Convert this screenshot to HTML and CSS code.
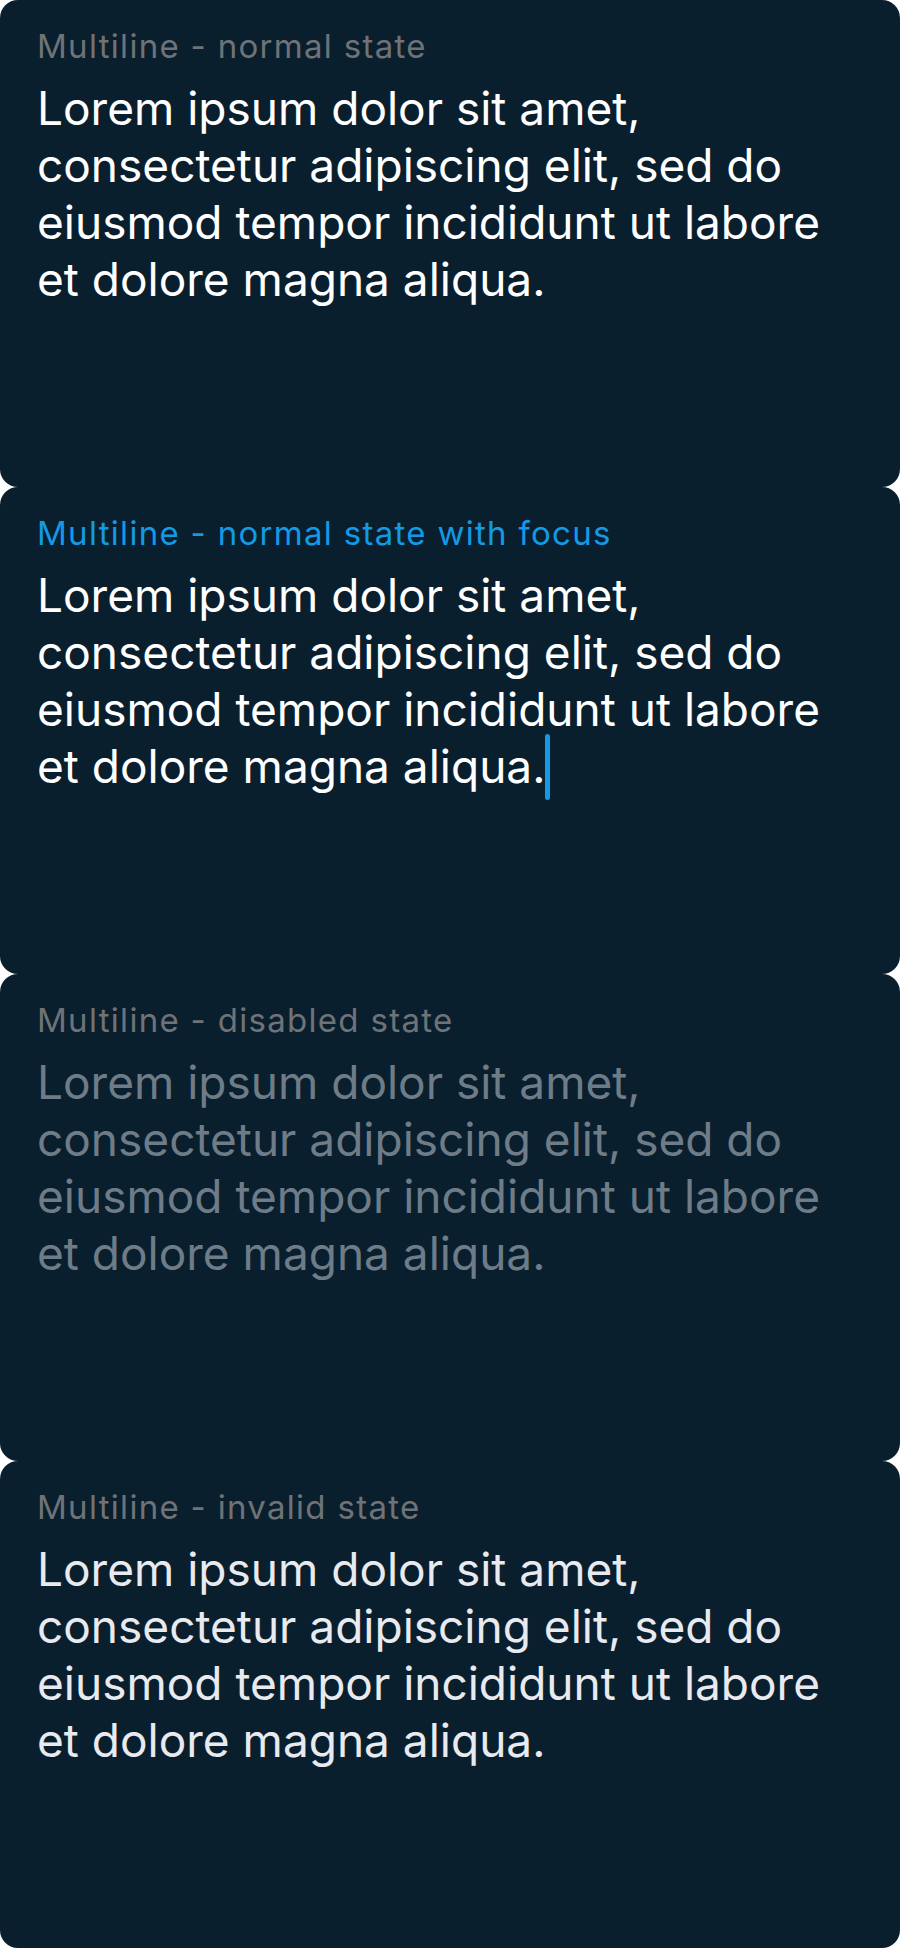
FILE: index.html
```html
<!DOCTYPE html>
<html lang="en">
<head>
<meta charset="utf-8">
<title>Multiline states</title>
<link rel="stylesheet" href="styles.css">
</head>
<body>
<main class="stack">
  <section class="field">
    <div class="field-label">Multiline - normal state</div>
    <div class="field-text">Lorem ipsum dolor sit amet,<br>consectetur adipiscing elit, sed do<br>eiusmod tempor incididunt ut labore<br>et dolore magna aliqua.</div>
  </section>
  <section class="field field--focus">
    <div class="field-label">Multiline - normal state with focus</div>
    <div class="field-text">Lorem ipsum dolor sit amet,<br>consectetur adipiscing elit, sed do<br>eiusmod tempor incididunt ut labore<br>et dolore magna aliqua.<span class="caret"></span></div>
  </section>
  <section class="field field--disabled">
    <div class="field-label">Multiline - disabled state</div>
    <div class="field-text">Lorem ipsum dolor sit amet,<br>consectetur adipiscing elit, sed do<br>eiusmod tempor incididunt ut labore<br>et dolore magna aliqua.</div>
  </section>
  <section class="field field--invalid">
    <div class="field-label">Multiline - invalid state</div>
    <div class="field-text">Lorem ipsum dolor sit amet,<br>consectetur adipiscing elit, sed do<br>eiusmod tempor incididunt ut labore<br>et dolore magna aliqua.</div>
  </section>
</main>
</body>
</html>
```
FILE: styles.css
```css
html, body {
  margin: 0;
  padding: 0;
  background: #ffffff;
}
body {
  font-family: Inter, "Noto Sans", "Liberation Sans", sans-serif;
}
.stack {
  display: flex;
  flex-direction: column;
}
.field {
  box-sizing: border-box;
  height: 487px;
  background: #0a1f2e;
  border-radius: 18px;
  padding: 28px 37px 0;
  display: flex;
  flex-direction: column;
}
.field-label {
  font-size: 33px;
  line-height: 36px;
  letter-spacing: 1.3px;
  color: #6f7377;
}
.field-text {
  margin-top: 16px;
  font-size: 46px;
  line-height: 57px;
  color: #ffffff;
}
.field--focus .field-label {
  color: #1399e5;
}
.field--disabled .field-text {
  color: #6e7c88;
}
.field--invalid .field-text {
  color: #e8eaef;
}
.caret {
  display: inline-block;
  width: 5px;
  height: 66px;
  margin: -10px 0 -17px 0;
  background: #1399e5;
  border-radius: 3px;
  vertical-align: baseline;
}
```
